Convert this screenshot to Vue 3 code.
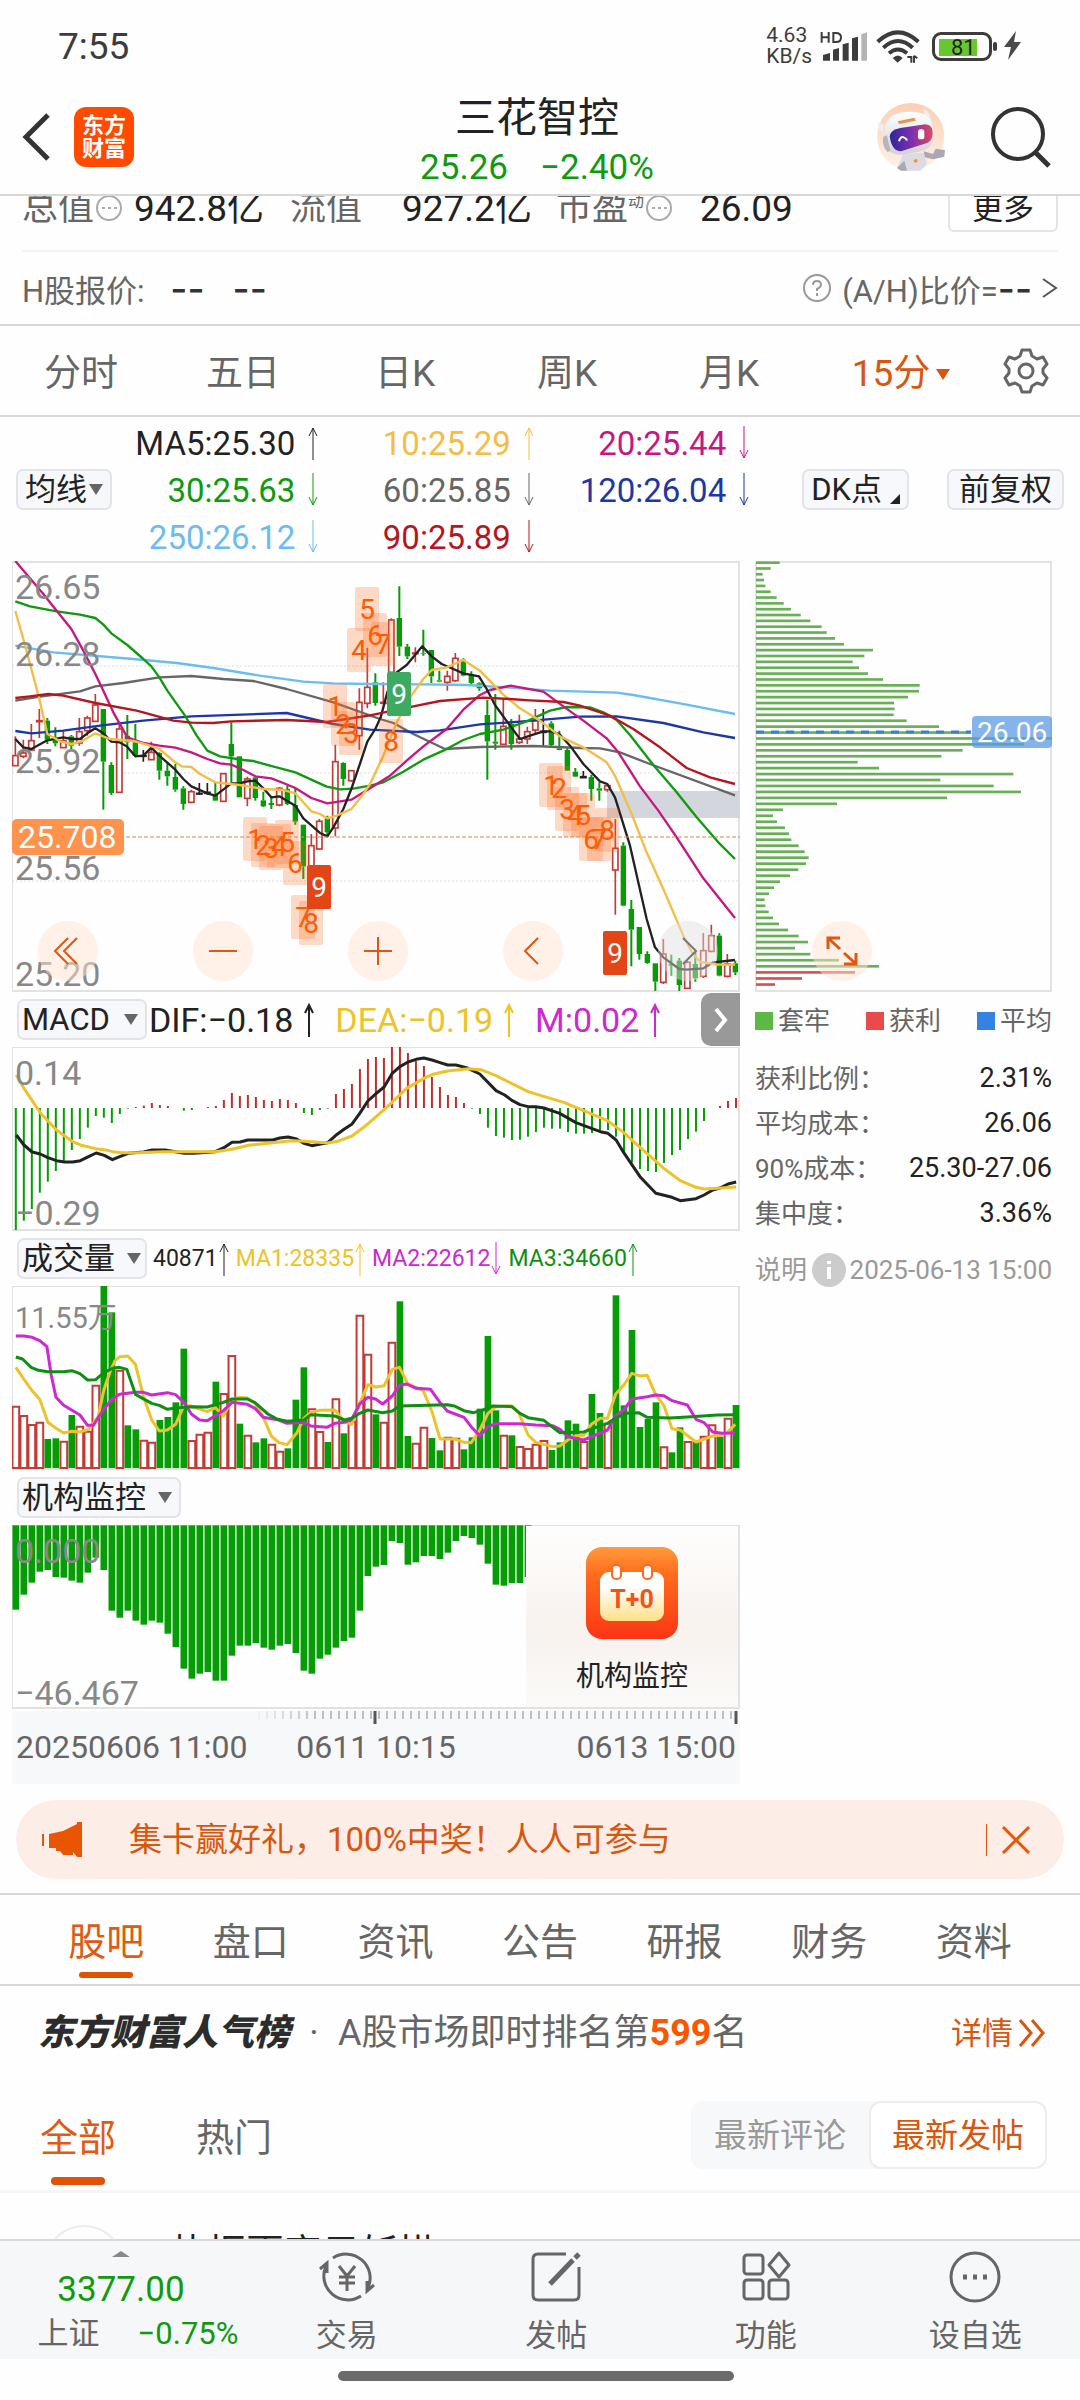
<script setup>
import { ref } from "vue"

const UP = "M6 34V2M2 10L6 2L10 10"
const DOWN = "M6 0V32M2 24L6 32L10 24"

const periods = ["分时", "五日", "日K", "周K", "月K", "15分"]
const period = ref("15分")

const averages = [
  { text: "MA5:25.30", color: "#222222", up: true },
  { text: "10:25.29", color: "#f4bd45", up: true },
  { text: "20:25.44", color: "#c7177e", up: false },
  { text: "30:25.63", color: "#109a10", up: false },
  { text: "60:25.85", color: "#666666", up: false },
  { text: "120:26.04", color: "#1d36a8", up: false },
  { text: "250:26.12", color: "#6bbcf0", up: false },
  { text: "90:25.89", color: "#b5161e", up: false }
]

// --- K line: colour, high, body top, body bottom, low ---
const candles = `r562,620,650,650 r572,612,622,628 r525,575,603,603 r480,515,518,567 g507,515,572,585
g535,570,583,592 r545,575,596,596 g558,562,590,600 r507,548,582,590 r500,507,545,560
r435,468,517,517 g480,480,638,782 g640,648,732,738 r520,540,730,732 g498,560,580,630
g525,580,620,622 k603,620,622,638 r578,610,632,632 g610,612,665,692 g640,665,682,710
g645,684,722,728 g712,718,765,782 r722,728,760,762 k702,733,735,738 k702,730,733,737
g700,737,755,756 r672,674,757,757 g520,585,622,700 g622,622,745,745 r683,690,748,772
g685,685,747,755 g728,754,772,774 g745,762,768,780 r715,718,768,772 g710,720,765,768
g718,768,818,827 g827,827,952,990 r855,890,960,970 r810,817,900,902 g800,808,850,862
r587,638,837,862 g640,642,690,710 r663,665,695,698 r418,460,560,602 r296,415,463,478
g373,400,462,470 r400,460,463,465 r208,213,370,440 g112,207,293,321 g285,293,322,330
r295,312,314,340 g242,312,314,320 g303,303,382,402 g365,394,398,400 r365,382,400,425
r312,328,395,398 g328,332,380,382 g367,375,402,405 g400,403,418,425 g452,498,577,692
g435,578,584,602 r450,532,586,588 g510,525,585,602 r497,570,580,585 r533,548,570,585
r480,515,543,557 k480,547,550,592 g517,523,588,595 g545,598,603,604 g597,603,665,666
g657,668,683,684 k666,683,686,687 g677,684,720,755 g700,718,725,755 r703,710,722,728
r810,898,963,1097 g880,890,1070,1072 g1053,1080,1142,1252 g1134,1134,1215,1232 g1207,1215,1242,1244
g1243,1243,1298,1326 r1170,1215,1300,1305 g1217,1245,1250,1280 g1227,1235,1308,1326 r1235,1240,1318,1320
g1210,1245,1288,1298 r1152,1205,1282,1287 r1127,1160,1207,1210 g1153,1160,1280,1282 r1215,1245,1282,1285
g1235,1243,1270,1278`.split(/\s+/).map((item, i) => {
  const [high, top, bottom, low] = item.slice(1).split(",").map(Number)
  return { kind: item[0], x: 46 + i * 24, high, top, bottom, low }
})

const priceLines = [
  { color: "#6bbcf0", points: "46,290 160,310 400,330 530,342 640,357 780,380 910,398 1000,403 1110,405 1270,406 1400,408 1530,416 1650,425 1850,431 1900,438 2060,467 2205,495" },
  { color: "#666666", points: "46,455 120,443 240,427 286,412 370,402 478,385 574,381 670,390 760,396 860,420 1000,460 1140,510 1180,522 1240,555 1335,600 1440,594 1600,591 1740,597 1800,598 1860,610 1950,645 2205,739" },
  { color: "#1d36a8", points: "46,546 94,553 190,545 300,530 430,515 574,502 860,492 1000,525 1110,542 1250,549 1320,544 1440,526 1560,518 1740,503 1850,502 1990,522 2110,550 2205,567" },
  { color: "#109a10", points: "46,157 90,172 170,187 240,197 286,207 310,227 334,253 382,288 430,330 454,352 478,385 502,425 555,500 590,560 622,605 660,622 730,633 760,636 810,650 886,670 980,713 1020,721 1060,719 1110,710 1150,700 1210,668 1270,632 1330,605 1390,573 1440,555 1510,542 1580,517 1650,485 1700,474 1770,475 1810,490 1850,513 1890,558 1960,648 2030,730 2090,805 2155,880 2205,930" },
  { color: "#c7177e", points: "46,36 130,135 170,185 214,240 250,305 286,375 310,425 340,490 382,565 430,582 478,590 526,596 574,610 622,630 660,643 694,647 730,663 766,682 814,688 850,702 886,717 934,747 982,763 1054,752 1110,718 1170,680 1220,635 1270,592 1340,540 1390,482 1440,438 1470,423 1532,410 1630,428 1690,472 1750,515 1820,568 1855,610 1920,712 1975,785 2030,865 2110,988 2205,1107" },
  { color: "#222222", points: "46,570 70,595 94,600 142,574 190,565 215,570 240,570 262,553 286,538 310,553 334,578 358,580 380,592 406,622 430,620 454,596 478,620 526,662 550,690 574,712 622,733 646,740 694,703 718,703 742,697 766,695 790,718 814,745 838,742 886,770 910,808 960,852 982,862 1000,835 1030,780 1054,720 1078,650 1102,578 1126,540 1142,505 1162,430 1190,370 1220,348 1267,292 1295,322 1325,345 1360,360 1390,373 1437,382 1460,420 1485,468 1530,530 1560,570 1590,560 1630,547 1655,547 1680,557 1710,590 1750,645 1800,697 1822,705 1845,745 1890,890 1940,1110 1965,1195 1990,1225 2038,1260 2060,1262 2110,1258 2140,1240 2205,1233" },
  { color: "#f4bd45", points: "46,186 70,270 94,360 118,450 142,555 180,577 215,585 245,577 286,553 330,570 400,576 440,587 478,600 526,640 545,652 574,654 600,675 646,700 720,708 790,720 850,723 886,733 934,787 960,795 982,808 1010,800 1054,780 1090,735 1110,705 1150,620 1190,520 1230,445 1270,390 1295,363 1340,355 1390,333 1440,365 1510,437 1560,478 1620,515 1680,562 1750,595 1820,640 1845,680 1895,795 1940,910 1990,1020 2050,1160 2075,1210 2100,1238 2150,1247 2205,1247" },
  { color: "#b5161e", points: "46,447 90,442 145,435 190,440 286,462 410,485 520,515 574,521 640,522 694,517 860,513 980,519 1060,507 1110,499 1240,472 1320,456 1450,446 1530,450 1590,454 1690,459 1740,470 1830,500 1900,540 1980,595 2060,657 2130,685 2205,705" }
]

// --- nine-turn counters on the K line ---
const turns = [
  [1, 729, 803], [2, 753, 821], [3, 777, 831], [4, 801, 824], [5, 825, 813], [6, 849, 877], [7, 873, 1038], [8, 897, 1057], [9, 921, 948, "#e24516"],
  [1, 969, 406], [2, 993, 458], [3, 1017, 487], [4, 1041, 237], [5, 1065, 113], [6, 1088, 192], [7, 1112, 218], [8, 1137, 510], [9, 1161, 369, "#3daa62"],
  [1, 1617, 643], [2, 1641, 651], [3, 1665, 715], [4, 1689, 732], [5, 1713, 732], [6, 1737, 804], [7, 1761, 804], [8, 1785, 777], [9, 1809, 1146, "#e24516"]
].map(([n, x, y, solid]) => ({ n, x: Math.round((x - 36) / 3), y: Math.round((y - 36) / 3), solid }))

const priceLabels = [
  { text: "26.65", y: 38 },
  { text: "26.28", y: 105 },
  { text: "25.92", y: 212 },
  { text: "25.56", y: 319 },
  { text: "25.20", y: 425 }
]

// --- chip distribution ---
const chips = [119, 92, 68, 72, 76, 92, 110, 131, 153, 182, 211, 245, 260, 285, 312, 399, 373, 338, 357, 384, 429, 539, 537, 504, 462, 464, 461, 500, 597, 693, 936, 852, 668, 604, 353, 417, 820, 601, 761, 843, 621, 291, 129, 99, 111, 135, 147, 154, 176, 194, 206, 198, 175, 150, 120, 102, 87, 74, 76, 86, 99, 117, 144, 176, 204, 165, 211, 297, 417, 345, 186, 105]
  .map((end, i) => ({ width: end - 48, y: 37 + 17.4 * i + 0.006 * i * i, win: i > 68 }))

const legend = [
  { name: "套牢", color: "#5cb946" },
  { name: "获利", color: "#e84b4b" },
  { name: "平均", color: "#3582e0" }
]
const costs = [
  { name: "获利比例：", value: "2.31%" },
  { name: "平均成本：", value: "26.06" },
  { name: "90%成本：", value: "25.30-27.06" },
  { name: "集中度：", value: "3.36%" }
]

// --- MACD ---
const macd = [720, 692, 657, 608, 575, 543, 512, 480, 447, 413, 378, 383, 399, 372, 356, 351, 347, 339, 345, 348, 354, 362, 360, 354, 351, 348, 330, 309, 318, 315, 321, 330, 333, 327, 330, 339, 369, 375, 360, 356, 312, 297, 282, 237, 207, 201, 204, 171, 171, 189, 213, 228, 261, 291, 315, 321, 339, 356, 372, 413, 438, 443, 450, 449, 440, 426, 413, 416, 416, 426, 431, 431, 429, 425, 420, 440, 487, 517, 537, 543, 546, 519, 495, 480, 447, 425, 393, 354, 348, 333, 324]
const dif = "34,435 50,465 67,486 84,492 100,503 118,512 135,516 152,516 168,512 185,500 201,489 218,496 235,509 250,500 268,490 300,486 318,480 345,480 385,490 405,490 450,485 468,473 485,457 502,456 518,450 570,450 585,444 602,441 620,447 635,460 652,467 670,462 685,458 702,436 720,417 736,402 752,370 769,333 786,311 803,291 820,250 836,230 853,216 870,208 886,204 903,210 920,218 936,225 953,225 975,233 1003,252 1037,302 1055,315 1070,331 1087,344 1104,350 1120,350 1137,354 1170,370 1204,398 1255,425 1271,430 1288,450 1304,488 1338,560 1371,610 1405,622 1422,632 1455,626 1472,615 1490,600 1505,594 1522,582 1539,576"
const dea = "34,255 50,295 84,368 118,420 152,455 168,465 200,476 218,479 235,485 255,488 290,488 340,485 380,485 450,485 485,478 520,466 570,458 610,452 640,454 685,459 705,454 736,438 769,402 810,350 850,295 890,262 905,253 936,243 980,236 1005,239 1037,257 1104,305 1180,338 1220,362 1270,392 1304,428 1338,472 1388,535 1422,572 1455,592 1472,597 1500,595 1539,591"

// --- volume ---
const volumes = "r380 r408 r435 r428 g477 g475 r485 g405 r440 r455 r317 g18 g97 r272 g436 g448 r482 r488 g420 g411 g367 g206 r483 r464 r458 g305 r342 r228 g431 r467 g487 g475 r494 r515 g505 g359 g262 r388 r456 g486 r358 g460 r425 r107 r224 g403 r428 r188 g64 g468 r491 r443 g474 g511 r473 r476 g508 g472 g386 g168 g391 r467 g466 r501 r507 r494 r483 g510 g487 g421 g431 r486 g342 g399 r431 g46 g376 g150 g441 g417 g367 r502 g517 g442 r486 g486 r470 r436 g470 r416 g375"
  .split(" ").map((item) => ({ rise: item[0] === "r", top: Number(item.slice(1)) }))
const volumeLines = [
  { color: "#edc22a", points: "33,262 50,298 67,332 83,358 100,427 117,445 133,459 150,454 167,456 185,448 205,410 217,330 230,275 240,243 250,230 267,228 283,253 300,350 317,420 333,453 350,450 367,433 385,375 400,378 433,395 450,383 467,408 485,360 500,352 517,354 533,370 550,410 567,468 583,488 600,494 620,460 635,415 650,397 667,391 700,390 720,425 735,433 752,370 769,314 785,321 803,317 820,268 835,262 852,310 885,333 903,395 920,477 950,477 970,487 985,488 1003,450 1020,400 1037,380 1070,377 1085,400 1104,465 1120,487 1155,500 1170,498 1187,480 1204,467 1220,466 1237,432 1255,415 1270,415 1287,343 1304,315 1321,280 1338,288 1353,286 1371,345 1388,377 1405,446 1422,450 1455,486 1490,468 1505,466 1520,458 1537,433" },
  { color: "#cc2ad0", points: "33,168 50,168 67,172 83,182 98,200 107,285 117,352 133,376 167,405 183,436 195,436 217,387 235,357 250,343 283,337 300,337 317,345 350,338 367,344 385,368 400,402 417,420 433,422 467,392 485,367 517,373 533,385 550,412 583,420 600,430 635,427 650,438 683,442 700,430 720,427 735,418 752,372 769,352 785,357 800,372 820,348 835,316 850,312 870,325 900,328 920,368 935,393 970,412 985,440 1003,468 1020,440 1037,431 1085,431 1120,435 1155,437 1170,447 1187,470 1220,480 1237,470 1270,450 1287,408 1304,390 1321,357 1353,350 1371,345 1388,347 1405,362 1437,375 1455,418 1472,428 1490,456 1510,460 1537,459" },
  { color: "#0f8f12", points: "33,231 47,237 65,262 80,271 100,275 133,275 150,272 167,281 183,300 200,299 217,278 235,265 250,262 265,268 283,343 317,370 333,376 350,388 367,384 400,380 433,381 467,367 485,357 517,357 533,368 560,402 580,418 600,424 635,420 650,404 700,408 720,420 735,415 752,400 769,390 800,398 820,393 835,378 935,374 950,378 970,392 990,398 1010,390 1030,378 1070,380 1087,400 1104,413 1137,421 1170,458 1220,456 1250,440 1270,430 1290,412 1310,400 1335,398 1353,412 1400,414 1437,411 1500,405 1537,404" }
]

// --- institution monitor ---
const monitor = [299, 254, 218, 185, 180, 201, 203, 212, 218, 188, 143, 180, 302, 323, 302, 332, 344, 332, 338, 371, 411, 476, 506, 491, 486, 512, 512, 437, 407, 407, 399, 413, 419, 407, 402, 429, 482, 491, 446, 434, 413, 393, 383, 302, 198, 170, 165, 93, 99, 164, 157, 138, 138, 147, 128, 93, 78, 84, 104, 161, 224, 227, 219, 219, 201]

const macdLegend = [
  { text: "DIF:−0.18", color: "#222222" },
  { text: "DEA:−0.19", color: "#edc22a" },
  { text: "M:0.02", color: "#cc2ad0" }
]
const volumeLegend = [
  { text: "40871", color: "#222222", up: true },
  { text: "MA1:28335", color: "#edc22a", up: true },
  { text: "MA2:22612", color: "#cc2ad0", up: false },
  { text: "MA3:34660", color: "#0f8f12", up: true }
]

const sections = ["股吧", "盘口", "资讯", "公告", "研报", "财务", "资料"]
const section = ref("股吧")
const feed = ref("全部")
const order = ref("最新发帖")
const bannerOpen = ref(true)
</script>

<template>
  <div class="page">
    <div class="status">
      <span class="clock">7:55</span>
      <div class="status-right">
        <span class="speed">4.63<br />KB/s</span>
        <svg width="48" height="34" viewBox="195 40 144 102">
          <path d="M204 135V118L225 112V135ZM234 135V102L252 97V135ZM263 135V86L281 81V135ZM291 135V68L309 63V135Z" fill="#3c3c3c" />
          <path d="M319 135V56L336 50V135Z" fill="#b4b4b4" />
          <path d="M200 49V81M221 49V81M200 65H221M235 52V79H243Q258 79 258 65.500T243 52Z" fill="none" stroke="#3c3c3c" stroke-width="6" />
        </svg>
        <svg width="44" height="34" viewBox="372 40 132 102">
          <g fill="none" stroke="#3c3c3c" stroke-width="12">
            <path d="M377 78Q438 22 499 78" />
            <path d="M394 96Q438 56 482 96" />
            <path d="M411 113Q438 90 465 113" />
          </g>
          <path d="M422 127Q438 112 452 127L437 141Z" fill="#3c3c3c" />
          <path d="M466 124H478V141M486 141V120M486 120L496 128" fill="none" stroke="#3c3c3c" stroke-width="6" />
        </svg>
        <div class="battery"><span>81</span></div>
        <svg class="bolt" width="18" height="30" viewBox="0 0 18 30"><path d="M12 0L0 16H7L4 29L17 11H10Z" fill="#4a4a4a" /></svg>
      </div>
    </div>

    <header>
      <div class="header-side">
        <button class="plain" aria-label="返回">
          <svg width="30" height="48" viewBox="0 0 30 48"><path d="M26 2L4 24L26 46" fill="none" stroke="#333" stroke-width="5" /></svg>
        </button>
        <a class="logo" href="#">东方<br />财富</a>
      </div>
      <div class="header-title">
        <h1>三花智控</h1>
        <p><span>25.26</span><span>−2.40%</span></p>
      </div>
      <div class="header-side end">
        <button class="plain" aria-label="助手">
          <svg width="70" height="70" viewBox="377 264 210 210">
            <defs>
              <linearGradient id="visor" x1="0" y1="0" x2="1" y2="0">
                <stop offset="0" stop-color="#2c259c" />
                <stop offset=".5" stop-color="#7c2fae" />
                <stop offset="1" stop-color="#dc4a62" />
              </linearGradient>
              <linearGradient id="shell" x1="0" y1="0" x2="0" y2="1">
                <stop offset="0" stop-color="#ffffff" />
                <stop offset="1" stop-color="#d4d1d6" />
              </linearGradient>
              <linearGradient id="halo" x1="0" y1="0" x2="0" y2="1">
                <stop offset="0" stop-color="#fdceb4" />
                <stop offset="1" stop-color="#fff2ea" />
              </linearGradient>
            </defs>
            <circle cx="481" cy="368" r="101" fill="url(#halo)" />
            <path d="M383 325L400 333L398 357Q384 350 383 325ZM520 285Q546 295 540 330L505 310Q525 305 520 285Z" fill="#efedf0" />
            <path d="M458 420L520 416L530 450L510 470H462L440 464Z" fill="#dddbe0" />
            <path d="M440 462L462 440L470 470H452ZM520 412L548 420L556 404L584 408L582 428L548 436L524 430Z" fill="#aaa8b2" />
            <path d="M403 350Q405 300 462 294Q532 288 546 330Q558 360 542 394Q530 412 480 418Q432 430 414 408Q400 390 403 350Z" fill="url(#shell)" />
            <path d="M399 368Q393 395 412 414L420 410L410 364Z" fill="#b7b4bd" />
            <path d="M442 322L492 311L496 320L446 330Z" fill="#e3954f" />
            <path d="M418 366Q420 348 450 342L525 331Q548 332 547 358Q546 382 528 388L452 412Q424 412 418 366Z" fill="url(#visor)" />
            <path d="M446 382Q450 366 460 370T469 380" fill="none" stroke="#fff" stroke-width="6" />
            <rect x="503" y="346" width="19" height="30" rx="8" fill="#fff" />
            <path d="M490 438L500 434L502 444L492 446Z" fill="#e3954f" />
          </svg>
        </button>
        <button class="plain" aria-label="搜索">
          <svg width="62" height="62" viewBox="0 0 62 62"><circle cx="28" cy="28" r="25" fill="none" stroke="#333" stroke-width="4" /><path d="M45 46L59 60" stroke="#333" stroke-width="5" /></svg>
        </button>
      </div>
    </header>

    <div class="quote-clip">
      <div class="quote">
        <span class="dim">总值</span>
        <svg class="dots" viewBox="0 0 26 26"><circle cx="13" cy="13" r="12" /><path d="M6 13H9M12 13H15M18 13H21" /></svg>
        <span class="val first">942.8亿</span>
        <span class="dim">流值</span>
        <span class="val second">927.2亿</span>
        <span class="dim">市盈<sup>动</sup></span>
        <svg class="dots" viewBox="0 0 26 26"><circle cx="13" cy="13" r="12" /><path d="M6 13H9M12 13H15M18 13H21" /></svg>
        <span class="val third">26.09</span>
        <button class="more">更多</button>
      </div>
    </div>

    <div class="h-share">
      <span>H股报价: <b>--</b><b>--</b></span>
      <a href="#">
        <svg width="30" height="30" viewBox="0 0 30 30"><circle cx="15" cy="15" r="13" fill="none" stroke="#999" stroke-width="2" /><path d="M11 12Q11 8 15 8T19 12Q19 14 15 16V18M15 20V23" fill="none" stroke="#999" stroke-width="2" /></svg>
        <span>(A/H)比价=<b>--</b></span>
        <svg width="16" height="22" viewBox="0 0 16 22"><path d="M1 2L14 11L1 20" fill="none" stroke="#555" stroke-width="2" /></svg>
      </a>
    </div>

    <nav class="periods">
      <button v-for="item in periods" :key="item" class="plain" :class="{ active: item === period }" @click="period = item">
        {{ item }}<i v-if="item === '15分'"></i>
      </button>
      <button class="plain gear" aria-label="设置">
        <svg width="48" height="48" viewBox="0 0 48 48" fill="none" stroke="#666" stroke-width="3" stroke-linejoin="round">
          <path d="M20 3H28L30 9L35 12L41 10L45 17L41 22V26L45 31L41 38L35 36L30 39L28 45H20L18 39L13 36L7 38L3 31L7 26V22L3 17L7 10L13 12L18 9Z" />
          <circle cx="24" cy="24" r="7" />
        </svg>
      </button>
    </nav>

    <div class="averages">
      <button class="chip tight">均线<i></i></button>
      <div class="average-list">
        <span v-for="item in averages" :key="item.text" :style="{ color: item.color }">
          {{ item.text }}
          <svg class="arrow" viewBox="0 0 12 34"><path :d="item.up ? UP : DOWN" /></svg>
        </span>
      </div>
      <button class="chip tight">DK点<em></em></button>
      <button class="chip tight">前复权</button>
    </div>

    <main>
      <section class="charts">
        <div class="plot">
          <svg viewBox="0 0 728 431">
            <rect x="0" y="1" width="727" height="429" class="frame" />
            <g class="guide">
              <path d="M0 105H728M0 212H728M0 320H728" />
            </g>
            <g transform="scale(.33333) translate(-36 -36)">
              <rect x="1821" y="726" width="399" height="81" fill="#d3d6dc" />
              <g v-for="(c, i) in candles" :key="i" :class="'candle-' + c.kind">
                <path :d="`M${c.x} ${c.high}V${c.top}M${c.x} ${c.bottom}V${c.low}`" />
                <rect :x="c.x - 8" :y="c.top" width="16" :height="Math.max(c.bottom - c.top, 2)" />
              </g>
              <polyline v-for="line in priceLines" :key="line.color" class="curve price" :points="line.points" :stroke="line.color" />
            </g>
            <path d="M0 276H728" stroke="#d48b50" stroke-width="1" stroke-dasharray="4 2" />
            <g v-for="(t, i) in turns" :key="i">
              <rect :x="t.x" :y="t.y" width="24" height="44" rx="2" :fill="t.solid || '#ff6a1f'" :fill-opacity="t.solid ? 1 : 0.25" />
              <text class="turn" :x="t.x + 12" :y="t.y + 32" :fill="t.solid ? '#fff' : '#ff5a00'">{{ t.n }}</text>
            </g>
            <text v-for="label in priceLabels" :key="label.text" class="axis" x="3" :y="label.y">{{ label.text }}</text>
            <rect x="0" y="258" width="112" height="36" rx="5" fill="#ff924d" />
            <text class="tag" x="6" y="287">25.708</text>
          </svg>
          <div class="controls">
            <button aria-label="最早"><svg viewBox="0 0 60 60"><path d="M30 17L17 30L30 43M39 17L26 30L39 43" /></svg></button>
            <button aria-label="缩小"><svg viewBox="0 0 60 60"><path d="M16 30H44" /></svg></button>
            <button aria-label="放大"><svg viewBox="0 0 60 60"><path d="M16 30H44M30 16V44" /></svg></button>
            <button aria-label="后退"><svg viewBox="0 0 60 60"><path d="M35 17L22 30L35 43" /></svg></button>
            <button class="off" aria-label="前进"><svg viewBox="0 0 60 60"><path d="M25 17L38 30L25 43" /></svg></button>
          </div>
        </div>

        <div class="bar macd-bar">
          <button class="chip">MACD<i></i></button>
          <span v-for="item in macdLegend" :key="item.text" :style="{ color: item.color }">
            {{ item.text }}
            <svg class="arrow" viewBox="0 0 12 34"><path :d="UP" /></svg>
          </span>
          <button class="next" aria-label="更多指标"><svg width="16" height="26" viewBox="0 0 16 26"><path d="M3 2L12 13L3 24" fill="none" stroke="#fff" stroke-width="4" /></svg></button>
        </div>
        <svg viewBox="0 0 728 184">
          <rect x="0" y="0" width="727" height="183" class="frame" />
          <g transform="translate(0 -57) scale(.47831 .33333) translate(-25 0)">
            <path v-for="(v, i) in macd" :key="i" class="stick" :d="`M${33 + i * 16.73} 354V${v}`" :stroke="v > 354 ? '#0a9a0a' : '#b8322f'" />
            <polyline class="curve" :points="dif" stroke="#222" />
            <polyline class="curve" :points="dea" stroke="#edc22a" />
          </g>
          <text class="axis" x="3" y="38">0.14</text>
          <text class="axis" x="3" y="178">−0.29</text>
        </svg>

        <div class="bar volume-bar">
          <button class="chip">成交量<i></i></button>
          <span v-for="item in volumeLegend" :key="item.text" :style="{ color: item.color }">
            {{ item.text }}
            <svg class="arrow" viewBox="0 0 12 34"><path :d="item.up ? UP : DOWN" /></svg>
          </span>
        </div>
        <svg viewBox="0 0 728 184">
          <rect x="0" y="0" width="727" height="183" class="frame" />
          <g transform="translate(0 -6) scale(.47831 .33333) translate(-25 0)">
            <rect v-for="(v, i) in volumes" :key="i" :class="v.rise ? 'rise' : 'fall'" :x="26 + i * 16.73" :y="v.top" width="14" :height="564 - v.top" />
            <polyline v-for="line in volumeLines" :key="line.color" class="curve" :points="line.points" :stroke="line.color" />
          </g>
          <text class="axis small" x="3" y="42">11.55万</text>
        </svg>

        <div class="bar">
          <button class="chip">机构监控<i></i></button>
        </div>
        <div class="plot">
          <svg viewBox="0 0 728 184">
            <rect x="0" y="0" width="727" height="183" class="frame" />
            <g transform="translate(0 -15) scale(.47831 .33333) translate(-25 0)">
              <rect v-for="(v, i) in monitor" :key="i" fill="#069c06" :x="26 + i * 16.73" y="46" width="14" :height="v - 46" />
            </g>
            <text class="axis" x="3" y="38">0.000</text>
            <text class="axis" x="3" y="180">−46.467</text>
          </svg>
          <a class="promo" href="#">
            <svg width="92" height="92" viewBox="0 0 92 92">
              <defs>
                <linearGradient id="tile" x1="0" y1="0" x2="0" y2="1">
                  <stop offset="0" stop-color="#ff9a3c" />
                  <stop offset=".3" stop-color="#ff6c1c" />
                  <stop offset="1" stop-color="#fb3515" />
                </linearGradient>
                <linearGradient id="sheet" x1="0" y1="0" x2="0" y2="1">
                  <stop offset=".3" stop-color="#ffffff" />
                  <stop offset="1" stop-color="#ffdf86" />
                </linearGradient>
              </defs>
              <rect width="92" height="92" rx="16" fill="url(#tile)" />
              <rect x="14" y="25" width="64" height="49" rx="9" fill="url(#sheet)" />
              <rect x="26" y="18" width="9" height="14" rx="4" fill="#fff" stroke="#fb6a25" stroke-width="2" />
              <rect x="57" y="18" width="9" height="14" rx="4" fill="#fff" stroke="#fb6a25" stroke-width="2" />
              <text x="46" y="61" text-anchor="middle" font-size="25" font-weight="700" fill="#f4511e">T+0</text>
            </svg>
            <span>机构监控</span>
          </a>
        </div>

        <div class="timeline">
          <svg viewBox="0 0 728 15">
            <path v-for="n in 60" :key="n" :d="`M${236 + n * 8 + 3} 0V8`" stroke="#888" stroke-width="1" :opacity="Math.min(n / 8, 1)" />
            <path d="M363 0V13M724 0V13" stroke="#555" stroke-width="3" />
          </svg>
          <div><span>20250606 11:00</span><span>0611 10:15</span><span>0613 15:00</span></div>
        </div>
      </section>

      <aside>
        <div class="plot">
          <svg viewBox="0 0 297 431">
            <rect x="1" y="1" width="295" height="429" fill="none" stroke="#c8c8c8" />
            <g transform="scale(.33333) translate(-45 -36)">
              <rect v-for="(chip, i) in chips" :key="i" x="48" :y="chip.y" :width="chip.width" height="8" :fill="chip.win ? '#d05555' : '#68b055'" />
            </g>
            <path d="M1 171H216" stroke="#3b7fd0" stroke-width="3" stroke-dasharray="8 7" />
            <rect x="217" y="155" width="80" height="32" rx="4" fill="#5c9ae4" fill-opacity=".75" />
            <text x="222" y="181" font-size="28" fill="#fff">26.06</text>
          </svg>
          <button class="expand" aria-label="全屏"><svg viewBox="0 0 60 60"><path d="M16 28V17H28M17 18L28 28M44 32V43H32M43 42L32 32" /></svg></button>
        </div>
        <ul class="legend">
          <li v-for="item in legend" :key="item.name"><i :style="{ background: item.color }"></i>{{ item.name }}</li>
        </ul>
        <table>
          <tbody>
            <tr v-for="row in costs" :key="row.name"><th>{{ row.name }}</th><td>{{ row.value }}</td></tr>
          </tbody>
        </table>
        <div class="note">
          <span>说明</span>
          <svg width="34" height="34" viewBox="0 0 34 34"><circle cx="17" cy="17" r="17" fill="#ccc" /><path d="M17 8V11M17 14V26" stroke="#fff" stroke-width="4" /></svg>
          <span class="time">2025-06-13 15:00</span>
        </div>
      </aside>
    </main>

    <div v-if="bannerOpen" class="banner">
      <svg width="42" height="36" viewBox="0 0 42 36"><path d="M1 12H3V24H1ZM8 12L22 9L36 2V0H41V35H36L32 30V33H22L19 29H15V26H8Z" fill="#ea5504" /></svg>
      <a href="#">集卡赢好礼，100%中奖！人人可参与</a>
      <button class="plain" aria-label="关闭" @click="bannerOpen = false">
        <svg width="32" height="32" viewBox="0 0 32 32"><path d="M3 3L29 29M29 3L3 29" stroke="#ea5504" stroke-width="3" /></svg>
      </button>
    </div>

    <nav class="sections">
      <button v-for="item in sections" :key="item" class="plain" :class="{ active: item === section }" @click="section = item">{{ item }}</button>
    </nav>

    <div class="rank">
      <strong>东方财富人气榜</strong>
      <span class="dot">·</span>
      <span class="rank-text">A股市场即时排名第<b>599</b>名</span>
      <a href="#">详情<svg width="28" height="28" viewBox="0 0 28 28"><path d="M2 1L13 14L2 27M14 1L25 14L14 27" fill="none" stroke="#d9560e" stroke-width="3" /></svg></a>
    </div>

    <div class="feed">
      <button v-for="item in ['全部', '热门']" :key="item" class="plain" :class="{ active: item === feed }" @click="feed = item">{{ item }}</button>
      <div class="order">
        <button v-for="item in ['最新评论', '最新发帖']" :key="item" :class="{ active: item === order }" @click="order = item">{{ item }}</button>
      </div>
    </div>

    <div class="post">
      <i></i><span>热振更宣只斩拱</span>
    </div>

    <footer>
      <button class="plain index">
        <u></u>
        <strong>3377.00</strong>
        <span>上证<b>−0.75%</b></span>
      </button>
      <button class="plain">
        <svg viewBox="0 0 56 56"><path d="M14 9A24 24 0 0 1 49 39M42 47A24 24 0 0 1 7 17M1 20L8 14V24M55 36L48 42V32M20 17L28 27L36 17M28 27V42M20 28H36M20 34H36" /></svg>
        交易
      </button>
      <button class="plain">
        <svg viewBox="0 0 56 56"><path d="M38 5H10Q5 5 5 10V46Q5 51 10 51H46Q51 51 51 46V18" /><path d="M22 35L45 11" stroke-width="5" /><path d="M47 9L51 5" stroke-width="5" /></svg>
        发帖
      </button>
      <button class="plain">
        <svg viewBox="0 0 56 56"><rect x="6" y="6" width="19" height="19" rx="3" /><rect x="6" y="31" width="19" height="19" rx="3" /><rect x="31" y="31" width="19" height="19" rx="3" /><path d="M41 4L51 16L41 28L31 16Z" stroke-linejoin="round" /></svg>
        功能
      </button>
      <button class="plain">
        <svg viewBox="0 0 56 56"><circle cx="28" cy="28" r="24" /><path d="M16 28H20M26 28H30M36 28H40" stroke-width="5" /></svg>
        设自选
      </button>
    </footer>
    <div class="home"><i></i></div>
  </div>
</template>

<style>
body {
  background: #fefefe;
}
</style>

<style scoped>
* {
  box-sizing: border-box;
}

.page {
  font-family: Roboto, "Noto Sans CJK SC", sans-serif;
  color: #222;
  line-height: 1;
  overflow: hidden;
}

button {
  font: inherit;
  color: inherit;
}

a {
  color: inherit;
  text-decoration: none;
}

svg {
  display: block;
}

.plain {
  border: 0;
  padding: 0;
  background: none;
}

.status {
  display: flex;
  justify-content: space-between;
  align-items: center;
  height: 92px;
  padding: 0 58px;
}

.clock {
  font-size: 37px;
  color: #3c3c3c;
}

.status-right {
  display: flex;
  align-items: center;
  gap: 8px;
}

.speed {
  font-size: 21px;
  color: #3c3c3c;
}

.battery {
  position: relative;
  width: 60px;
  height: 29px;
  margin-left: 4px;
  padding: 4px;
  border: 3px solid #3c3c3c;
  border-radius: 9px;
}

.battery span {
  display: block;
  width: 38px;
  height: 17px;
  padding-left: 12px;
  background: #66c82e;
  font-size: 22px;
  line-height: 18px;
}

.battery::after {
  content: "";
  position: absolute;
  right: -8px;
  top: 7px;
  width: 4px;
  height: 9px;
  border-radius: 2px;
  background: #3c3c3c;
}

.bolt {
  margin-left: 4px;
}

header {
  display: grid;
  grid-template-columns: 1fr auto 1fr;
  align-items: center;
  height: 104px;
  padding: 0 28px 0 22px;
  border-bottom: 2px solid #d8d8d8;
}

.header-side {
  display: flex;
  align-items: center;
  gap: 22px;
  padding-bottom: 12px;
}

.header-side.end {
  justify-content: flex-end;
  gap: 44px;
}

.logo {
  width: 60px;
  height: 60px;
  padding-top: 7px;
  border-radius: 12px;
  background: #ff4a00;
  color: #fff;
  text-align: center;
  font-size: 22px;
  font-weight: 700;
  line-height: 23px;
}

.header-title {
  text-align: center;
}

h1 {
  margin: 0;
  font-size: 41px;
  font-weight: 400;
  line-height: 50px;
}

.header-title p {
  display: flex;
  justify-content: center;
  gap: 32px;
  margin: 0;
  font-size: 35px;
  line-height: 50px;
  color: #0f9a0f;
}

.quote-clip {
  height: 56px;
  margin: 0 22px;
  overflow: hidden;
  border-bottom: 2px solid #f4f4f4;
}

.quote {
  display: flex;
  align-items: center;
  height: 48px;
  margin-top: -12px;
  font-size: 36px;
}

.dim {
  color: #666;
}

.dim sup {
  font-size: 16px;
  line-height: 0;
}

.dots {
  width: 26px;
  height: 26px;
  margin-left: 2px;
  fill: none;
  stroke: #aaa;
  stroke-width: 2;
}

.val {
  font-size: 37px;
}

.val.first {
  margin: 0 26px 0 12px;
}

.val.second {
  margin: 0 24px 0 40px;
}

.val.third {
  margin-left: 28px;
}

.more {
  width: 110px;
  height: 48px;
  margin-left: auto;
  border: 2px solid #e4e4e4;
  border-radius: 6px;
  background: #fff;
  font-size: 31px;
}

.h-share {
  display: flex;
  justify-content: space-between;
  align-items: center;
  height: 74px;
  padding: 0 22px;
  border-bottom: 2px solid #d8d8d8;
  font-size: 31px;
  color: #666;
}

.h-share b {
  font-family: Inter, sans-serif;
  font-size: 37px;
  font-weight: 500;
  color: #333;
}

.h-share > span b {
  margin-left: 28px;
}

.h-share > span b:first-child {
  margin-left: 18px;
}

.h-share a {
  display: flex;
  align-items: center;
  gap: 10px;
}

.periods {
  display: grid;
  grid-template-columns: repeat(6, 3fr) 2fr;
  height: 91px;
  border-bottom: 2px solid #d8d8d8;
  font-size: 37px;
  color: #666;
}

.periods button {
  padding-top: 5px;
}

.periods .active {
  color: #d9560e;
}

.periods i {
  display: inline-block;
  margin: 0 -20px 6px 6px;
  border: 7px solid transparent;
  border-top: 11px solid #d9560e;
  border-bottom: 0;
}

.periods .gear {
  display: grid;
  place-items: center start;
  padding: 0 0 0 30px;
}

.averages {
  display: flex;
  align-items: center;
  height: 144px;
  padding: 0 16px;
}

.average-list {
  flex: 1;
  display: grid;
  grid-template-columns: repeat(3, 1fr);
  grid-auto-rows: 47px;
  margin: 2px 52px 0 -8px;
}

.average-list span {
  display: flex;
  align-items: center;
  justify-content: flex-end;
  gap: 12px;
  font-size: 33px;
}

.arrow {
  width: 12px;
  height: 34px;
  fill: none;
  stroke: currentColor;
  stroke-width: 2;
}

.average-list .arrow,
.volume-bar .arrow {
  stroke-width: 1;
}

.chip {
  display: flex;
  align-items: center;
  justify-content: space-between;
  height: 41px;
  padding: 0 7px 0 3px;
  border: 2px solid #e3e4e8;
  border-radius: 7px;
  background: #f7f8fb;
  font-size: 31px;
  line-height: 1;
  white-space: nowrap;
}

.chip i {
  margin-left: 12px;
  border: 7px solid transparent;
  border-top: 11px solid #666;
  border-bottom: 0;
}

.chip em {
  align-self: flex-end;
  margin: 0 0 4px 8px;
  border: 5px solid #222;
  border-top-color: transparent;
  border-left-color: transparent;
}

.chip.tight {
  padding: 0 7px;
}

.chip.tight i {
  margin-left: 2px;
}

.chip.tight:last-child {
  margin-left: 38px;
  padding: 0 10px;
}

main {
  display: grid;
  grid-template-columns: 728fr 297fr;
  gap: 15px;
  padding: 0 28px 0 12px;
}

.charts > svg,
.plot > svg {
  width: 100%;
}

.plot {
  position: relative;
}

.frame {
  fill: none;
  stroke: #e2e2e2;
  stroke-width: 2;
}

.guide {
  stroke: #ddd;
  stroke-dasharray: 2 2;
}

.curve {
  fill: none;
  stroke-width: 3;
  stroke-linejoin: round;
  vector-effect: non-scaling-stroke;
}

/* drawn in the scaled group, three units to the pixel */
.curve.price {
  stroke-width: 7;
  vector-effect: none;
}

.stick {
  stroke-width: 2;
  vector-effect: non-scaling-stroke;
}

.candle-r {
  fill: #fff;
  stroke: #c43a36;
  stroke-width: 5;
}

.candle-g {
  fill: #069c06;
  stroke: #069c06;
  stroke-width: 6;
}

.candle-g rect {
  stroke: none;
}

.candle-k {
  fill: #222;
  stroke: #222;
  stroke-width: 5;
}

.rise {
  fill: #fff;
  stroke: #c43a36;
  stroke-width: 2;
  vector-effect: non-scaling-stroke;
}

.fall {
  fill: #069c06;
}

.axis {
  font-size: 34px;
  fill: #888;
}

.axis.small {
  font-size: 29px;
}

.tag {
  font-size: 32px;
  fill: #fff;
}

.turn {
  font-size: 28px;
  text-anchor: middle;
}

.controls {
  position: absolute;
  left: 26px;
  right: 22px;
  bottom: 11px;
  display: flex;
  justify-content: space-between;
}

.controls button,
.expand {
  width: 60px;
  height: 60px;
  padding: 0;
  border: 0;
  border-radius: 50%;
  background: rgba(255, 226, 210, 0.5);
}

.controls svg,
.expand svg {
  fill: none;
  stroke: #e0570f;
  stroke-width: 2;
}

.controls .off {
  background: rgba(225, 225, 225, 0.45);
}

.controls .off svg {
  stroke: #777;
}

.expand {
  position: absolute;
  left: 57px;
  bottom: 11px;
}

.expand svg {
  stroke-width: 3;
}

.bar {
  position: relative;
  display: flex;
  align-items: center;
  height: 55px;
  padding-left: 5px;
  font-size: 34px;
}

.bar span {
  display: flex;
  align-items: center;
  gap: 10px;
}

.macd-bar span {
  margin-left: 2px;
  margin-right: 18px;
}

.macd-bar .chip,
.volume-bar .chip {
  width: 130px;
}

.next {
  display: grid;
  place-items: center;
  width: 39px;
  height: 53px;
  margin-left: auto;
  padding: 0;
  border: 0;
  border-radius: 10px 0 0 10px;
  background: #999;
}

.volume-bar span {
  gap: 0;
  margin-left: 6px;
  font-size: 23px;
}

.promo {
  position: absolute;
  right: 2px;
  top: 1px;
  bottom: 2px;
  width: 212px;
  display: flex;
  flex-direction: column;
  align-items: center;
  justify-content: center;
  gap: 24px;
  padding-top: 4px;
  background: linear-gradient(#fefefe, #f8f2ee 55%, #fbfaf8);
  font-size: 28px;
}

.timeline {
  height: 73px;
  margin-top: 2px;
  background: #f7f8fa;
}

.timeline svg {
  width: 100%;
}

.timeline div {
  display: grid;
  grid-template-columns: 1fr auto 1fr;
  padding: 5px 4px 0;
  font-size: 32px;
  color: #666;
}

.timeline span:last-child {
  text-align: right;
}

aside {
  color: #666;
}

.legend {
  display: flex;
  justify-content: space-between;
  margin: 0;
  padding: 0;
  height: 58px;
  list-style: none;
  font-size: 26px;
}

.legend li {
  display: flex;
  align-items: center;
  gap: 5px;
}

.legend i {
  width: 18px;
  height: 18px;
}

table {
  width: 100%;
  margin-top: 6px;
  border-collapse: collapse;
  font-size: 26px;
}

tr {
  height: 45px;
}

th,
td {
  padding: 0;
  font-weight: 400;
  text-align: left;
}

td {
  font-size: 27px;
  color: #222;
  text-align: right;
}

.note {
  display: flex;
  align-items: center;
  height: 68px;
  font-size: 26px;
  color: #999;
}

.note svg {
  margin-left: 5px;
}

.note .time {
  margin-left: auto;
}

.banner {
  display: flex;
  align-items: center;
  height: 79px;
  margin: 16px 16px 14px;
  padding: 0 32px 0 25px;
  border-radius: 40px;
  background: #fceee6;
  font-size: 33px;
  color: #d9560e;
}

.banner a {
  margin-left: 46px;
}

.banner button {
  margin-left: auto;
  padding-left: 13px;
  border-left: 1px solid #d9560e;
}

.sections {
  display: grid;
  grid-template-columns: repeat(7, 1fr);
  height: 93px;
  padding: 0 34px;
  border-top: 2px solid #d8d8d8;
  border-bottom: 2px solid #d8d8d8;
  font-size: 38px;
  color: #666;
}

.sections button,
.feed > button {
  position: relative;
  padding-top: 5px;
}

.active {
  color: #e05a10;
}

.sections .active::after,
.feed > .active::after {
  content: "";
  position: absolute;
  left: 50%;
  bottom: 6px;
  width: 54px;
  height: 6px;
  margin-left: -27px;
  border-radius: 3px;
  background: #e05206;
}

.rank {
  display: flex;
  align-items: center;
  height: 94px;
  padding: 0 34px 0 38px;
  font-size: 36px;
  color: #666;
}

.rank strong {
  font-weight: 900;
  font-style: italic;
  color: #2c2c2c;
}

.dot {
  width: 48px;
  text-align: center;
}

.rank b {
  color: #ff5500;
}

.rank a {
  display: flex;
  align-items: center;
  gap: 5px;
  margin-left: auto;
  font-size: 31px;
  color: #d9560e;
}

.feed {
  display: flex;
  align-items: center;
  gap: 80px;
  height: 113px;
  padding: 0 33px 0 40px;
  border-bottom: 3px solid #f6f6f6;
  font-size: 38px;
  color: #666;
}

.feed > button {
  height: 110px;
}

.feed > .active::after {
  bottom: 5px;
  height: 8px;
  border-radius: 4px;
}

.order {
  display: flex;
  margin-left: auto;
  border-radius: 12px;
  background: #f7f8fa;
}

.order button {
  width: 178px;
  height: 68px;
  padding: 0;
  border: 2px solid transparent;
  border-radius: 12px;
  background: none;
  font-size: 33px;
  color: #999;
}

.order .active {
  border-color: #ededef;
  background: #fff;
  color: #d9560e;
}

.post {
  display: flex;
  height: 46px;
  padding: 32px 0 0 44px;
  overflow: hidden;
}

.post i {
  width: 80px;
  height: 80px;
  border: 2px solid #ececec;
  border-radius: 50%;
}

.post span {
  margin: 9px 0 0 46px;
  font-size: 38px;
}

footer {
  display: flex;
  height: 120px;
  border-top: 2px solid #d8d8d8;
  background: #f6f7f9;
  font-size: 31px;
  color: #666;
}

footer button {
  flex: 1;
  display: flex;
  flex-direction: column;
  align-items: center;
  justify-content: center;
  gap: 15px;
}

footer svg {
  width: 56px;
  height: 56px;
  fill: none;
  stroke: #666;
  stroke-width: 3;
}

footer .index {
  flex: none;
  width: 242px;
  gap: 11px;
}

.index u {
  border: 9px solid transparent;
  border-bottom: 6px solid #888;
  border-top: 0;
}

.index strong {
  font-size: 35px;
  font-weight: 400;
  margin-top: 4px;
  color: #0f9a0f;
}

.index span {
  padding-left: 34px;
}

.index b {
  margin-left: 38px;
  font-weight: 400;
  color: #0f9a0f;
}

.home {
  display: flex;
  justify-content: center;
  height: 41px;
  padding: 12px 8px 0 0;
}

.home i {
  width: 37%;
  height: 10px;
  border-radius: 5px;
  background: #6b6b6b;
}
</style>
